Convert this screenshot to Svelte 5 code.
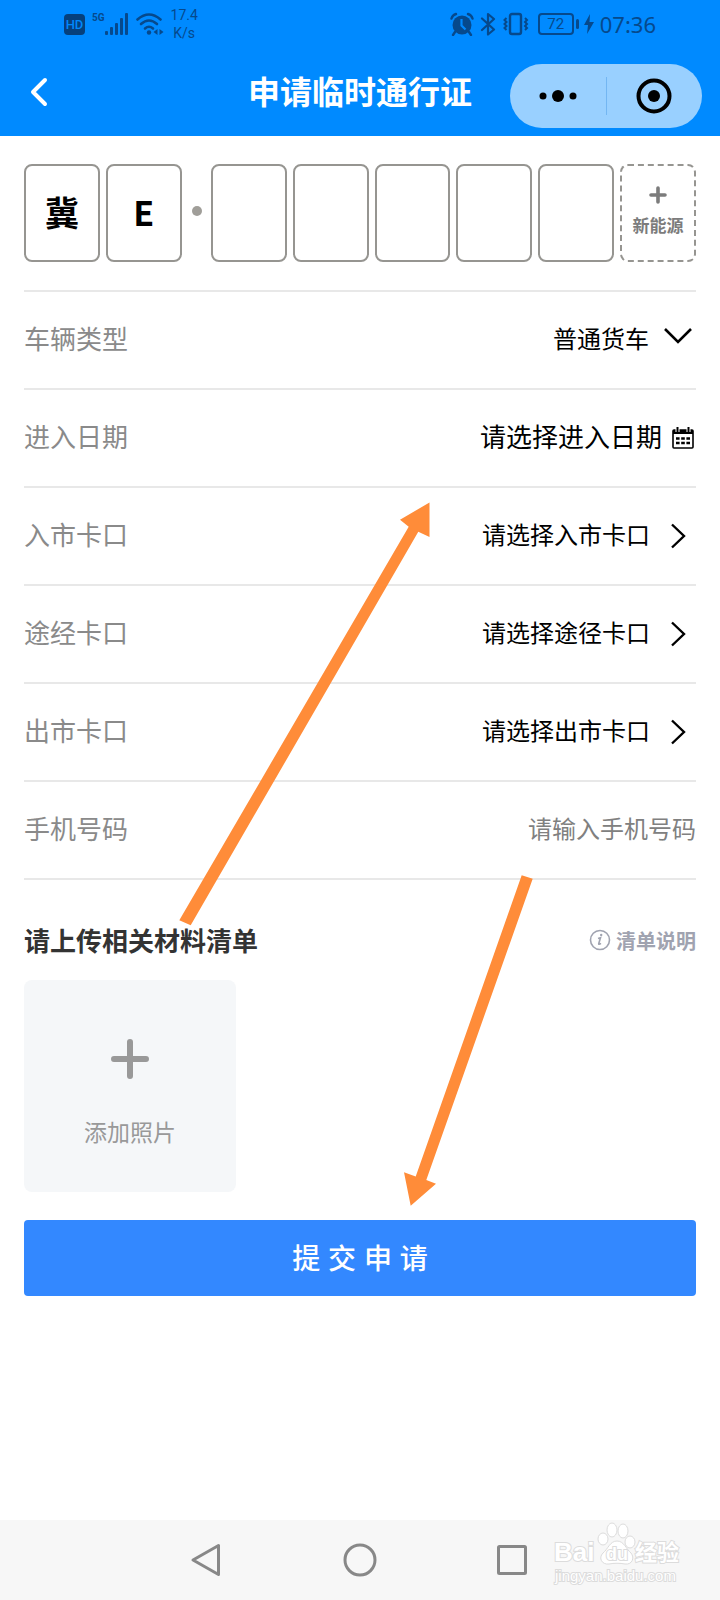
<script lang="ts">
	let plate = $state(['冀', 'E', '', '', '', '', '']);
	let vehicleType = $state('普通货车');
	let phone = $state('');

	// Rows that open a checkpoint picker
	const checkpoints = [
		{ id: 'entry', label: '入市卡口', hint: '请选择入市卡口' },
		{ id: 'via', label: '途经卡口', hint: '请选择途径卡口' },
		{ id: 'exit', label: '出市卡口', hint: '请选择出市卡口' }
	];
</script>

<div class="page">
	<header class="top">
		<div class="status">
			<div class="status-group">
				<span class="hd">HD</span>
				<span class="signal">
					<span class="net">5G</span>
					<svg width="24" height="22" viewBox="0 0 24 22" fill="currentColor" aria-hidden="true">
						<rect x="0" y="18" width="3" height="4" rx="1" />
						<rect x="5" y="14" width="3" height="8" rx="1" />
						<rect x="10" y="10" width="3" height="12" rx="1" />
						<rect x="15" y="5" width="3" height="17" rx="1" />
						<rect x="20" y="0" width="3" height="22" rx="1" />
					</svg>
				</span>
				<svg width="28" height="24" viewBox="0 0 28 24" fill="none" stroke="currentColor" stroke-width="2.6" stroke-linecap="round" aria-hidden="true">
					<path d="M1.500 7.500Q13 -2.500 24.500 7.500" />
					<path d="M5 12Q13 5 21 12" />
					<path d="M9 16.500Q13 13 17 16.500" />
					<circle cx="13" cy="20.500" r="2.200" fill="currentColor" stroke="none" />
					<path d="M21.500 17v6l-4-3zM23.500 17v6l4-3z" fill="currentColor" stroke="none" />
				</svg>
				<span class="speed">17.4<br />K/s</span>
			</div>
			<div class="status-group right">
				<svg width="24" height="24" viewBox="0 0 24 24" aria-hidden="true">
					<circle cx="12" cy="13" r="9.500" fill="currentColor" />
					<path d="M5 20l-2 3M19 20l2 3M1.500 6.500Q2.500 3 6 2M22.500 6.500Q21.500 3 18 2" fill="none" stroke="currentColor" stroke-width="2.400" stroke-linecap="round" />
					<path d="M11.500 7v6.500l4 4" fill="none" stroke="#0088fd" stroke-width="2.200" />
				</svg>
				<svg width="16" height="24" viewBox="0 0 16 24" fill="none" stroke="currentColor" stroke-width="2.200" stroke-linejoin="round" stroke-linecap="round" aria-hidden="true">
					<path d="M2 6.500l12 11-6 5V2l6 5-12 11" />
				</svg>
				<svg width="28" height="24" viewBox="0 0 28 24" fill="none" stroke="currentColor" aria-hidden="true">
					<rect x="8" y="2" width="11" height="20" rx="2" stroke-width="2.400" />
					<path d="M4.500 6l-2 2 2 2-2 2 2 2-2 2 2 2M23 6l2 2-2 2 2 2-2 2 2 2-2 2" stroke-width="2" />
				</svg>
				<span class="battery">72</span>
				<svg width="10" height="20" viewBox="0 0 10 20" fill="currentColor" aria-hidden="true">
					<path d="M6 0L0 11h4L3 20l7-12H5.500z" />
				</svg>
				<span class="clock">07:36</span>
			</div>
		</div>
		<div class="titlebar">
			<button class="back" type="button" aria-label="返回">
				<svg width="18" height="30" viewBox="0 0 18 30" fill="none" stroke="#fff" stroke-width="4" stroke-linecap="round" stroke-linejoin="round">
					<path d="M15 3L3 15l12 12" />
				</svg>
			</button>
			<h1>申请临时通行证</h1>
			<div class="capsule">
				<button type="button" aria-label="更多">
					<svg width="38" height="14" viewBox="0 0 38 14">
						<circle cx="4" cy="7" r="3.500" />
						<circle cx="19" cy="7" r="6" />
						<circle cx="34" cy="7" r="3.500" />
					</svg>
				</button>
				<button type="button" aria-label="关闭">
					<svg width="36" height="36" viewBox="0 0 36 36">
						<circle cx="18" cy="18" r="15.500" fill="none" stroke="#000" stroke-width="4" />
						<circle cx="18" cy="18" r="6" />
					</svg>
				</button>
			</div>
		</div>
	</header>

	<form class="form" onsubmit={(e) => e.preventDefault()}>
		<div class="plate">
			{#each plate as _, i}
				{#if i === 2}
					<span class="dot"></span>
				{/if}
				<input class="cell" type="text" maxlength="1" aria-label="车牌第{i + 1}位" bind:value={plate[i]} />
			{/each}
			<button class="cell energy" type="button">
				<svg width="18" height="18" viewBox="0 0 18 18" stroke="currentColor" stroke-width="3.600" stroke-linecap="round" aria-hidden="true">
					<path d="M9 2v14M2 9h14" />
				</svg>
				新能源
			</button>
		</div>

		<div class="row">
			<label for="type">车辆类型</label>
			<div class="select">
				<select id="type" bind:value={vehicleType}>
					<option>普通货车</option>
				</select>
				<svg width="28" height="18" viewBox="0 0 28 18" fill="none" stroke="#000" stroke-width="2.600" aria-hidden="true">
					<path d="M1 2l13 13L27 2" />
				</svg>
			</div>
		</div>

		<div class="row">
			<label for="date">进入日期</label>
			<button id="date" class="picker date" type="button">
				请选择进入日期
				<svg width="22" height="22" viewBox="0 0 22 22" aria-hidden="true">
					<rect x="1" y="3" width="20" height="18" rx="1" fill="none" stroke="#000" stroke-width="1.600" />
					<path d="M1 3h20v4H1z" />
					<path d="M5.500 0v5M16.500 0v5" stroke="#fff" stroke-width="4" />
					<path d="M5.500 0v5M16.500 0v5" stroke="#000" stroke-width="2" />
					<path d="M4 11.500h14M4 16h14" stroke="#000" stroke-width="2.600" stroke-dasharray="3.600 1.600" />
				</svg>
			</button>
		</div>

		{#each checkpoints as item}
			<div class="row">
				<label for={item.id}>{item.label}</label>
				<button id={item.id} class="picker" type="button">
					{item.hint}
					<svg width="16" height="26" viewBox="0 0 16 26" fill="none" stroke="#000" stroke-width="2.400" aria-hidden="true">
						<path d="M2 1.500L14 13 2 24.500" />
					</svg>
				</button>
			</div>
		{/each}

		<div class="row">
			<label for="phone">手机号码</label>
			<input id="phone" class="phone" type="tel" placeholder="请输入手机号码" bind:value={phone} />
		</div>

		<div class="materials">
			<h2>请上传相关材料清单</h2>
			<a href="#list">
				<svg width="22" height="22" viewBox="0 0 22 22" fill="none" stroke="currentColor" aria-hidden="true">
					<circle cx="11" cy="11" r="9.500" stroke-width="1.600" />
					<path d="M9 9.500l2.500-.8-1.800 6q-.2 1.200 2.300-.4" stroke-width="1.600" />
					<circle cx="12.200" cy="6" r="1.200" fill="currentColor" stroke="none" />
				</svg>
				清单说明
			</a>
		</div>

		<button class="photo" type="button">
			<svg width="38" height="40" viewBox="0 0 38 40" stroke="#999" stroke-width="6" stroke-linecap="round" aria-hidden="true">
				<path d="M19 3v34M3 20h32" />
			</svg>
			添加照片
		</button>

		<button class="submit" type="submit">提 交 申 请</button>
	</form>

	<svg class="arrows" viewBox="0 0 720 1600" fill="#ff8c39" aria-hidden="true">
		<path d="M179.300 920.300L408.700 526.700 400 519.700 429.500 502.500 429.500 537 418.300 531.700 190.700 925.300z" />
		<path d="M521.700 875.300L415.700 1176.500 404 1172.300 410.700 1205.700 436 1183.700 426.300 1180 532.700 878.700z" />
	</svg>

	<nav class="nav">
		<button type="button" aria-label="返回">
			<svg width="36" height="36" viewBox="0 0 36 36">
				<path d="M5 18L30.500 3.500v29z" />
			</svg>
		</button>
		<button type="button" aria-label="主页">
			<svg width="36" height="36" viewBox="0 0 36 36">
				<circle cx="18" cy="18" r="15" />
			</svg>
		</button>
		<button type="button" aria-label="最近任务">
			<svg width="36" height="36" viewBox="0 0 36 36">
				<rect x="2.500" y="4.500" width="27" height="27" rx="1" />
			</svg>
		</button>
		<svg class="watermark" width="136" height="66" viewBox="0 0 136 66">
			<g fill="#fff" stroke="#dcdcdc">
				<ellipse cx="53" cy="18" rx="5" ry="6" />
				<ellipse cx="62" cy="9" rx="5" ry="7" />
				<ellipse cx="73" cy="10" rx="5" ry="7" />
				<ellipse cx="80" cy="21" rx="5" ry="6" />
				<path d="M67 20c-7 0-9 8-14 12-5 5-1 12 6 11 5-1 11-1 16 0 7 1 10-6 6-11-5-4-7-12-14-12z" />
			</g>
			<text class="brand" x="4" y="40">Bai</text>
			<text class="du" x="56" y="39">du</text>
			<text class="brand zh" x="85" y="39">经验</text>
			<text class="site" x="5" y="60">jingyan.baidu.com</text>
		</svg>
	</nav>
</div>

<style>
	:global(body) {
		margin: 0;
		background: #fff;
	}

	.page {
		position: relative;
		display: flex;
		flex-direction: column;
		min-height: 100vh;
		font-family: "Noto Sans CJK SC", sans-serif;
		color: #000;
	}

	button,
	input,
	select {
		box-sizing: border-box;
		margin: 0;
		padding: 0;
		border: 0;
		background: none;
		font: inherit;
		color: inherit;
	}

	svg {
		display: block;
		flex: none;
	}

	.top {
		background: #008aff;
	}

	.status {
		display: flex;
		justify-content: space-between;
		height: 48px;
		padding: 0 64px;
		color: #06498c;
		font-family: Roboto, sans-serif;
	}

	.status-group {
		display: flex;
		align-items: center;
		gap: 7px;
	}

	.status-group.right {
		gap: 6px;
	}

	.hd {
		width: 21px;
		border-radius: 4px;
		background: #06407c;
		color: #0088fd;
		font-size: 13px;
		font-weight: 500;
		line-height: 21px;
		text-align: center;
	}

	.signal {
		display: flex;
		align-items: flex-start;
	}

	.net {
		font-size: 10px;
		font-weight: 700;
		line-height: 10px;
	}

	.speed {
		font-size: 14px;
		line-height: 18px;
		text-align: center;
	}

	.battery {
		position: relative;
		box-sizing: border-box;
		width: 36px;
		margin: 0 4px 0 2px;
		border: 2px solid;
		border-radius: 4px;
		font-size: 15px;
		line-height: 18px;
		text-align: center;
	}

	.battery::after {
		content: '';
		position: absolute;
		top: 4px;
		right: -7px;
		width: 3px;
		height: 10px;
		border-radius: 2px;
		background: currentColor;
	}

	.clock {
		font-family: "Noto Sans", sans-serif;
		font-size: 22px;
		line-height: 24px;
	}

	.titlebar {
		display: grid;
		grid-template-columns: 1fr auto 1fr;
		align-items: center;
		height: 88px;
		padding: 0 18px;
	}

	.back {
		justify-self: start;
		padding: 0 12px;
	}

	h1,
	h2 {
		margin: 0;
		font-weight: 700;
	}

	h1 {
		padding-bottom: 4px;
		font-size: 32px;
		line-height: 40px;
		color: #fff;
	}

	.capsule {
		display: flex;
		justify-self: end;
		width: 192px;
		height: 64px;
		margin-top: 8px;
		border-radius: 32px;
		background: #99d0ff;
	}

	.capsule button {
		flex: 1;
		display: flex;
		align-items: center;
		justify-content: center;
	}

	.capsule button + button {
		position: relative;
	}

	.capsule button + button::before {
		content: '';
		position: absolute;
		left: 0;
		top: 13px;
		bottom: 13px;
		width: 1px;
		background: #73b6f2;
	}

	.form {
		flex: 1;
		padding: 28px 24px;
	}

	.plate {
		display: flex;
		align-items: center;
		gap: 6px;
		padding-bottom: 28px;
		border-bottom: 2px solid #e8e8e8;
	}

	.cell {
		flex: 1;
		width: 0;
		min-width: 0;
		height: 98px;
		padding-bottom: 4px;
		border: 2px solid #969591;
		border-radius: 8px;
		font-size: 34px;
		font-weight: 700;
		text-align: center;
	}

	.dot {
		width: 10px;
		height: 10px;
		margin: 0 3px 4px 4px;
		border-radius: 50%;
		background: #a09e99;
	}

	.energy {
		display: flex;
		flex-direction: column;
		align-items: center;
		justify-content: center;
		gap: 10px;
		border-style: dashed;
		font-size: 17px;
		line-height: 22px;
		white-space: nowrap;
		color: #7c7c7c;
	}

	.row {
		display: flex;
		align-items: center;
		justify-content: space-between;
		height: 90px;
		padding-bottom: 6px;
		border-bottom: 2px solid #e8e8e8;
		font-size: 24px;
	}

	.row label {
		font-size: 26px;
		color: #8a8a8a;
	}

	.select {
		position: relative;
	}

	select {
		appearance: none;
		height: 40px;
		padding-right: 47px;
	}

	.select svg {
		position: absolute;
		top: 10px;
		right: 4px;
		pointer-events: none;
	}

	.picker {
		display: flex;
		align-items: center;
		gap: 20px;
		padding-right: 10px;
	}

	.picker svg {
		margin-top: 6px;
	}

	.picker.date {
		gap: 10px;
		padding-right: 2px;
		font-size: 26px;
	}

	.phone {
		width: 260px;
		height: 40px;
		text-align: right;
	}

	.phone::placeholder {
		color: #808080;
		opacity: 1;
	}

	.materials {
		display: flex;
		align-items: center;
		justify-content: space-between;
		padding: 40px 0 20px;
	}

	h2 {
		font-size: 26px;
		line-height: 40px;
		color: #333;
	}

	.materials a {
		display: flex;
		align-items: center;
		gap: 5px;
		font-size: 20px;
		font-weight: 700;
		color: #a0a3b0;
		text-decoration: none;
	}

	.photo {
		display: flex;
		flex-direction: column;
		align-items: center;
		justify-content: center;
		gap: 36px;
		width: 212px;
		height: 212px;
		margin-bottom: 28px;
		padding-top: 14px;
		border-radius: 8px;
		background: #f5f7f9;
		font-size: 23px;
		line-height: 32px;
		color: #999;
	}

	.submit {
		display: block;
		width: 100%;
		height: 76px;
		padding-bottom: 2px;
		border-radius: 4px;
		background: #3388ff;
		font-family: "Liberation Sans", "Noto Sans CJK SC", sans-serif;
		font-size: 28px;
		font-weight: 500;
		color: #fff;
	}

	.arrows {
		position: absolute;
		top: 0;
		left: 0;
		width: 100%;
		pointer-events: none;
	}

	.nav {
		position: relative;
		display: flex;
		align-items: center;
		justify-content: center;
		gap: 118px;
		height: 80px;
		background: #f7f7f7;
	}

	.nav button svg {
		fill: none;
		stroke: #888;
		stroke-width: 3;
		stroke-linejoin: round;
	}

	.watermark {
		position: absolute;
		right: 34px;
		top: 1px;
	}

	.watermark text {
		fill: #fff;
		stroke: #dcdcdc;
		stroke-width: 2px;
		paint-order: stroke;
	}

	.brand {
		font: 700 26px "Liberation Sans", sans-serif;
	}

	.brand.zh {
		font: 700 22px "Noto Sans CJK SC", sans-serif;
	}

	.du {
		font: 700 18px "Liberation Sans", sans-serif;
	}

	.site {
		font: 400 15px "Liberation Sans", sans-serif;
	}
</style>
